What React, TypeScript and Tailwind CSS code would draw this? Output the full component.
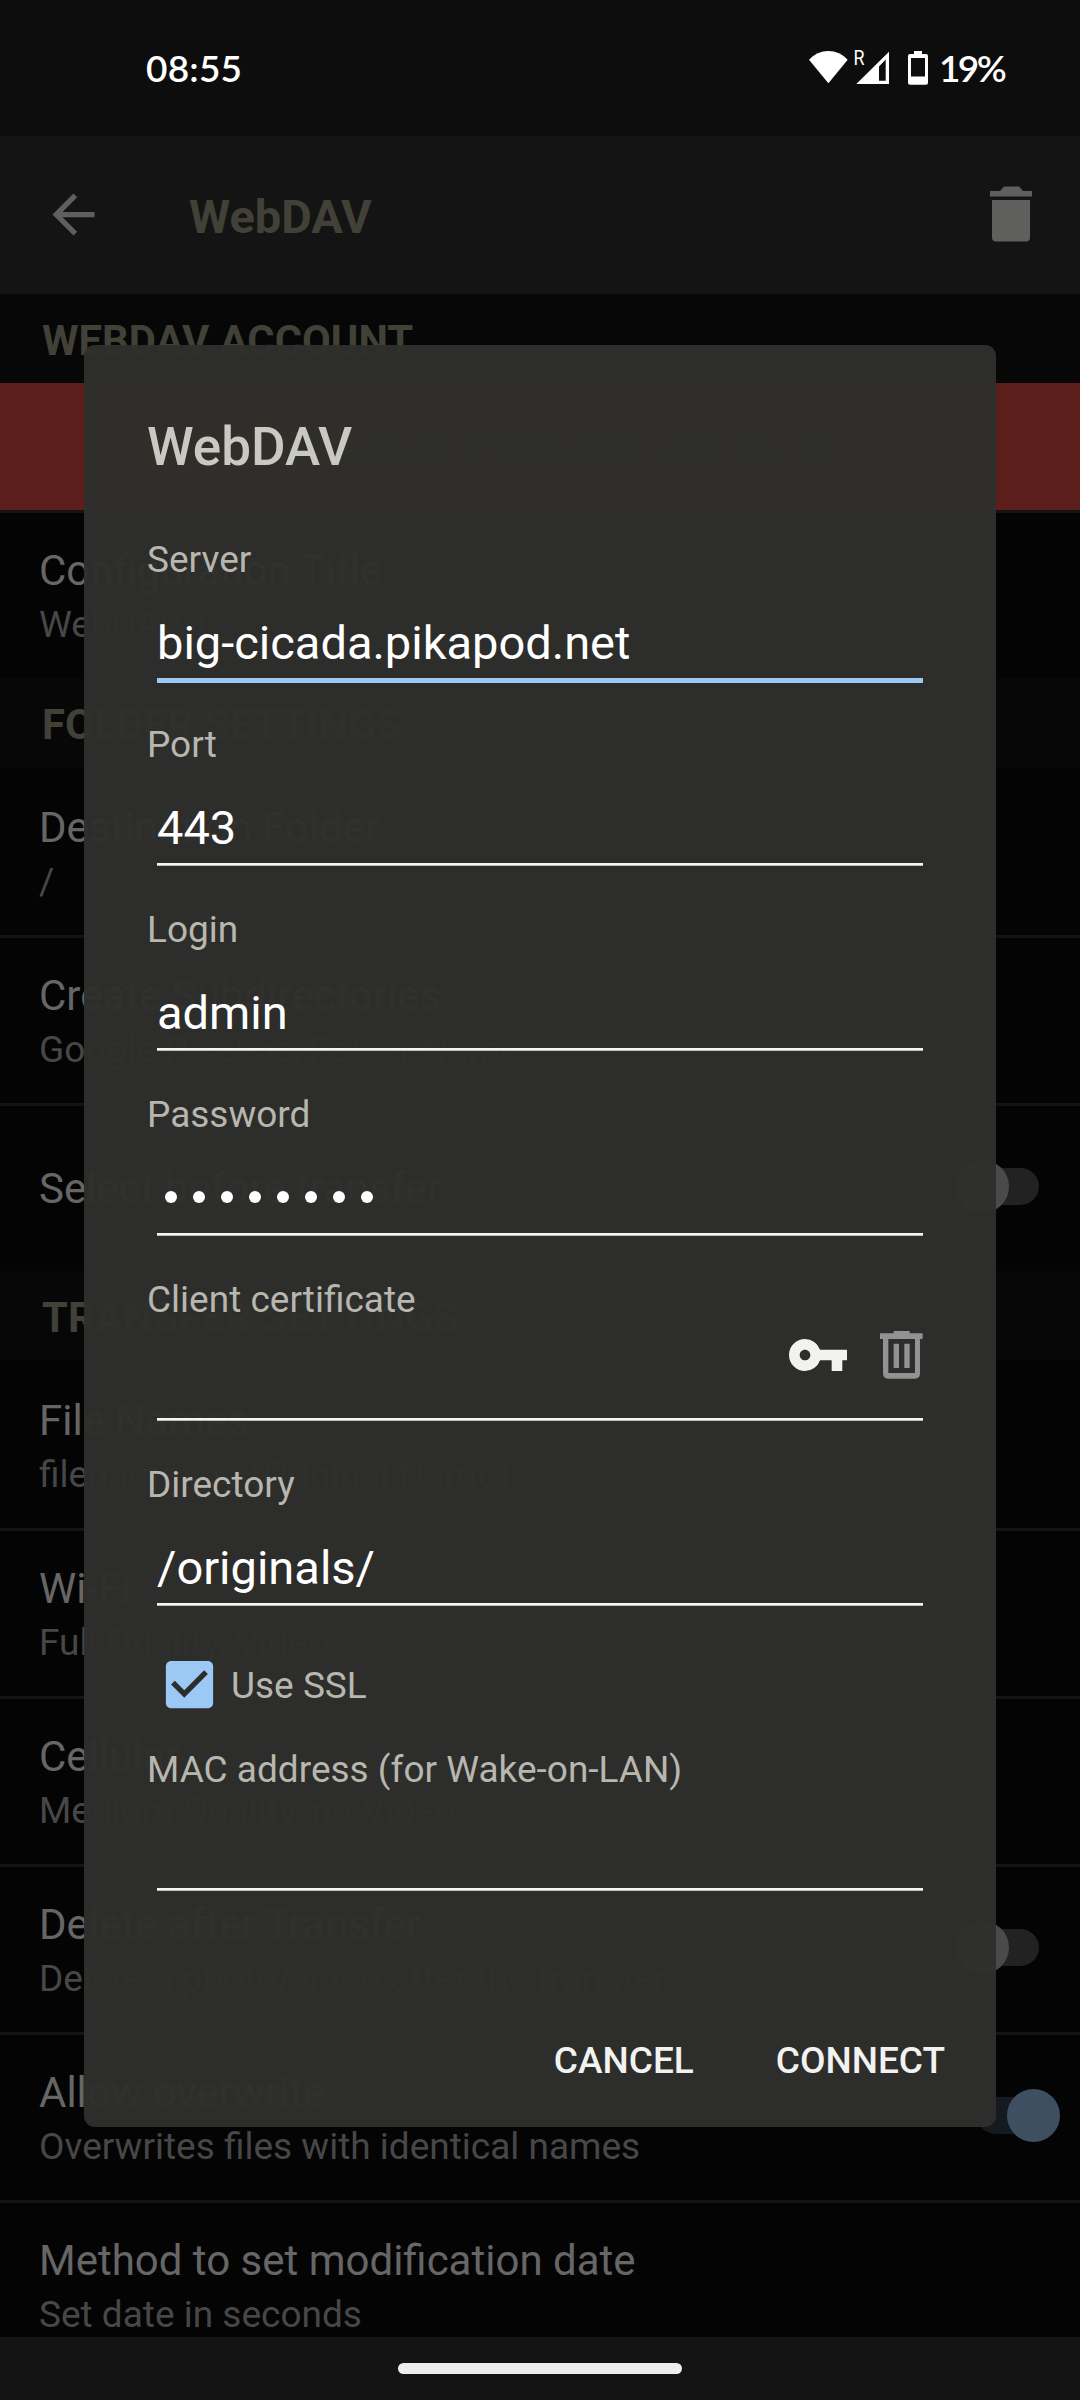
import React from "react";

type RowProps = { title: string; sub?: string; toggle?: "on" | "off"; first?: boolean; last?: boolean };

function Toggle({ state }: { state: "on" | "off" }) {
  return (
    <div className="relative -mt-[5px] flex h-[37px] w-[62px] shrink-0 items-center">
      <div className={state === "on" ? "h-full w-full rounded-full bg-[#151a20]" : "h-full w-full rounded-full bg-[#222222]"} />
      <div
        className={
          state === "on"
            ? "absolute left-[30px] size-[53px] rounded-full bg-[#3d4f61]"
            : "absolute -left-[21px] size-[53px] rounded-full bg-[#4a4a4a]"
        }
      />
    </div>
  );
}

function Row({ title, sub, toggle, first, last }: RowProps) {
  return (
    <div className={first ? "pt-[3px]" : ""}>
      <div className="flex h-[165px] items-center justify-between pr-[41px] pl-[39px]">
        <div>
          <div className="text-[42px] leading-[50px] text-[#666666]">{title}</div>
          {sub && <div className="mt-[7px] text-[37px] leading-[43px] text-[#474747]">{sub}</div>}
        </div>
        {toggle && <Toggle state={toggle} />}
      </div>
      {!last && <div className="h-[3px] bg-[#131313]" />}
    </div>
  );
}

function Section({ children }: { children: string }) {
  return (
    <div className="flex h-[89px] items-center bg-[#070707] pt-[4px] pl-[42px] text-[41.8px] leading-[50px] font-bold text-[#414137]">
      {children}
    </div>
  );
}

type FieldProps = { label: string; value?: React.ReactNode; focused?: boolean };

function Field({ label, value, focused }: FieldProps) {
  return (
    <div className="h-[185px]">
      <div className="text-[37px] leading-[43px] text-[#b7b7af]">{label}</div>
      <div className="mr-[10px] ml-[10px]">
        <div className="mt-[34px] h-[56px] text-[47px] leading-[56px] text-white">{value}</div>
        {focused ? (
          <div className="mt-[7px] h-[5px] bg-[#9bc8f4]" />
        ) : (
          <div className="mt-[7px] h-[3px] border-b border-[#bdbdba] bg-[#f5f5f1]" />
        )}
      </div>
    </div>
  );
}

function KeyIcon() {
  return (
    <svg className="h-[32px] w-[58.67px]" viewBox="1 6 22 12" fill="#f2f2f0">
      <path d="M12.65 10A5.99 5.99 0 0 0 7 6c-3.31 0-6 2.69-6 6s2.69 6 6 6a5.99 5.99 0 0 0 5.65-4H17v4h4v-4h2v-4H12.65zM7 14c-1.1 0-2-.9-2-2s.9-2 2-2 2 .9 2 2-.9 2-2 2z" />
    </svg>
  );
}

function OutlineTrashIcon() {
  return (
    <svg className="h-[47.67px] w-[42.67px]" viewBox="0 0 128 143" fill="#929292">
      <path d="M41 0h48v7h39v17h-8v103q0 16-16 16H25q-16 0-16-16V24H0V7h41zM25 24v102h80V24z" fillRule="evenodd" />
      <path d="M41 38h16v73H41zM73 38h16v73H73z" />
    </svg>
  );
}

function StatusBar() {
  return (
    <div className="flex h-[136px] items-start justify-between bg-[#0d0d0d] pr-[74px] pl-[146px] font-['Lato',sans-serif] text-[37px] font-semibold text-white">
      <div className="mt-[46px] leading-[44px] tracking-[0.2px]">08:55</div>
      <div className="mt-[46px] flex leading-[44px]">
        <svg className="mt-[4px] h-[36px] w-[122px] overflow-visible" viewBox="808 50 122 36" fill="#ffffff">
          <path d="M809 59.8Q817 51 828.4 51T847.7 59.8L828.4 83.3z" />
          <path fillRule="evenodd" d="M856.3 84L889 51.7V84zM879 66.5V80.7H885.7V59.4z" />
          <path fillRule="evenodd" d="M914 51h8v3h4q2 0 2 2v26.7q0 2-2 2h-16q-2 0-2-2V56q0-2 2-2h4zM911 58v18.5h14V58z" />
          <text x="853.5" y="65" fontFamily="Roboto" fontSize="20" fontWeight="400" textLength="11" lengthAdjust="spacingAndGlyphs">R</text>
        </svg>
        <div className="ml-[9px] w-[67px] tracking-[-2.6px] whitespace-nowrap">19%</div>
      </div>
    </div>
  );
}

function AppBar() {
  return (
    <div className="flex h-[158px] items-center bg-[#141414] pr-[48px] pb-px pl-[42px]">
      <svg className="size-[63px]" viewBox="0 0 24 24" fill="#5f5f5f">
        <path d="M20 11H7.83l5.59-5.59L12 4l-8 8 8 8 1.41-1.41L7.83 13H20v-2z" />
      </svg>
      <div className="ml-[84px] flex-1 pt-[5px] text-[47px] leading-[56px] font-bold text-[#414137]">WebDAV</div>
      <svg className="-mt-px h-[56px] w-[42px]" viewBox="0 0 42 56" fill="#5f5f5e">
        <path d="M0 5h10l4-4.5h15L33 5h9v5.5H0zM2 14h38v37.5q0 4-4 4H6q-4 0-4-4z" />
      </svg>
    </div>
  );
}

function Dialog() {
  return (
    <div className="absolute top-[345px] left-[84px] flex h-[1782px] w-[912px] flex-col rounded-[11px] bg-[#2e2e2c]/97 pr-[63px] pl-[63px]">
      <div className="mt-[71px] text-[53px] leading-[62px] font-medium text-[#c9c9c2]">WebDAV</div>
      <div className="mt-[60px]">
        <Field label="Server" value="big-cicada.pikapod.net" focused />
        <Field label="Port" value="443" />
        <Field label="Login" value="admin" />
        <Field
          label="Password"
          value={
            <div className="flex gap-[16px] pt-[21px] pl-[8px]">
              {Array.from({ length: 8 }, (_, i) => (
                <span key={i} className="size-[12px] rounded-full bg-white" />
              ))}
            </div>
          }
        />
        <Field
          label="Client certificate"
          value={
            <div className="flex h-[24px] items-end justify-end gap-[33px]">
              <div className="mb-[8px]">
                <KeyIcon />
              </div>
              <OutlineTrashIcon />
            </div>
          }
        />
        <Field label="Directory" value="/originals/" />
        <div className="mb-[27px] flex h-[73px] items-center pl-[11px]">
          <svg className="size-[63px]" viewBox="0 0 24 24" fill="#9bc8f4">
            <path d="M19 3H5c-1.11 0-2 .9-2 2v14c0 1.1.89 2 2 2h14c1.11 0 2-.9 2-2V5c0-1.1-.89-2-2-2zm-9 14l-5-5 1.41-1.41L10 14.17l7.59-7.59L19 8l-9 9z" />
          </svg>
          <span className="ml-[10px] pt-px text-[37px] leading-[43px] text-[#b7b7af]">Use SSL</span>
        </div>
        <Field label="MAC address (for Wake-on-LAN)" />
      </div>
      <div className="mt-[106px] -mr-[12px] flex justify-end gap-[82px] text-[37px] leading-[43px] font-medium text-[#f2f2f0]">
        <span>CANCEL</span>
        <span>CONNECT</span>
      </div>
    </div>
  );
}

export default function App() {
  return (
    <div className="relative flex h-[2400px] w-[1080px] flex-col overflow-hidden bg-[#040404] font-['Roboto',sans-serif]">
      <StatusBar />
      <AppBar />
      <div className="h-[2043px] overflow-hidden">
        <Section>WEBDAV ACCOUNT</Section>
        <div className="flex h-[127px] items-center justify-center bg-[#5c1e1a] text-[47px] text-[#1c1c1c]">
          Configure WebDAV account
        </div>
        <div className="h-[3px] bg-[#131313]" />
        <Row title="Configuration Title" sub="WebDAV 1" last />
        <Section>FOLDER SETTINGS</Section>
        <Row title="Destination Folder" sub="/" first />
        <Row title="Create Subdirectories" sub="Google Pixel 5a/Folder Name" />
        <Row title="Select before transfer" toggle="off" last />
        <Section>TRANSFER SETTINGS</Section>
        <Row title="File Names" sub="filename.jpg (Original Name)" first />
        <Row title="Wi-Fi" sub="Full Quality, Videos" />
        <Row title="Cellular" sub="Medium Quality, no Video" />
        <Row title="Delete after Transfer" sub="Delete a photo/video after the transfer." toggle="off" />
        <Row title="Allow overwrite" sub="Overwrites files with identical names" toggle="on" />
        <Row title="Method to set modification date" sub="Set date in seconds" last />
      </div>
      <div className="flex h-[63px] justify-center bg-[#141414] pt-[26px]">
        <div className="h-[11px] w-[284px] rounded-full bg-[#ededed]" />
      </div>
      <Dialog />
    </div>
  );
}
